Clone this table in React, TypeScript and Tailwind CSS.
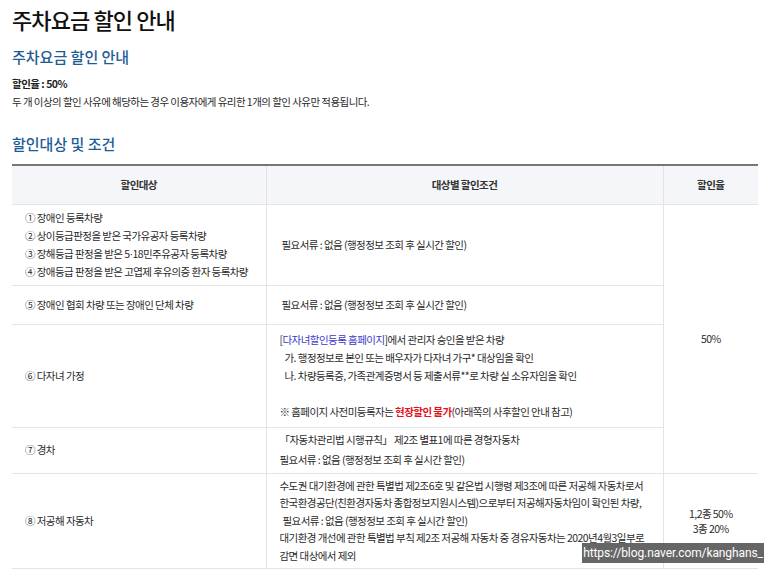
import React from 'react';

const font = "font-['Noto_Sans_CJK_KR','Noto_Sans',sans-serif]";

const Lines = ({ items }: { items: React.ReactNode[] }) => (
  <div>
    {items.map((t, i) => (
      <div key={i} className="whitespace-nowrap leading-[18px] h-[18px]">
        {t}
      </div>
    ))}
  </div>
);

const NO_DOCS = '필요서류 : 없음 (행정정보 조회 후 실시간 할인)';

export default function App() {
  const cell = 'border-b border-[#e4e4e4] px-[13px] align-middle';
  const mid = 'border-l border-r border-[#e1e1e1]';

  return (
    <div className={`relative h-screen overflow-hidden bg-white text-[#2a2a2a] ${font}`}>
      <div className="pl-[12px] pr-[15px] pt-[3px]">
        {/* Titles */}
        <h1 className="text-[22px] leading-[32px] tracking-[-0.9px] font-medium text-[#111]">주차요금 할인 안내</h1>
        <h2 className="mt-[11px] text-[15px] leading-[22px] tracking-[0px] font-medium text-[#1d5c96]">
          주차요금 할인 안내
        </h2>
        <p className="mt-[7px] text-[10.5px] leading-[18px] font-bold tracking-[-0.5px] text-[#222]">할인율 : 50%</p>
        <p className="text-[10.5px] leading-[18px] tracking-[-0.55px]">
          두 개 이상의 할인 사유에 해당하는 경우 이용자에게 유리한 1개의 할인 사유만 적용됩니다.
        </p>
        <h2 className="mt-[22px] text-[15px] leading-[22px] tracking-[0px] font-medium text-[#1d5c96]">
          할인대상 및 조건
        </h2>

        {/* Table */}
        <table className="mt-[9px] w-[746px] border-collapse border-t-2 border-[#777] text-[10.5px] tracking-[-0.55px]">
          <colgroup>
            <col className="w-[254px]" />
            <col className="w-[397px]" />
            <col className="w-[95px]" />
          </colgroup>
          <thead>
            <tr className="h-[39px] bg-[#f5f6f9] text-[#333]">
              <th className="border-b border-[#e4e4e4] font-bold">할인대상</th>
              <th className={`border-b border-[#e4e4e4] font-bold ${mid}`}>대상별 할인조건</th>
              <th className="border-b border-[#e4e4e4] font-bold">할인율</th>
            </tr>
          </thead>
          <tbody>
            <tr className="h-[81px]">
              <td className={cell}>
                <Lines
                  items={[
                    '① 장애인 등록차량',
                    '② 상이등급판정을 받은 국가유공자 등록차량',
                    <>
                      ③ 장해등급 판정을 받은 5<span className="font-['Liberation_Sans',sans-serif]">·</span>18민주유공자 등록차량
                    </>,
                    '④ 장애등급 판정을 받은 고엽제 후유의증 환자 등록차량',
                  ]}
                />
              </td>
              <td className={`${cell} ${mid} pl-[15px]`}>
                <Lines items={[NO_DOCS]} />
              </td>
              <td rowSpan={4} className="border-b border-[#e4e4e4] text-center align-middle">
                50%
              </td>
            </tr>
            <tr className="h-[39px]">
              <td className={cell}>
                <Lines items={['⑤ 장애인 협회 차량 또는 장애인 단체 차량']} />
              </td>
              <td className={`${cell} ${mid} pl-[15px]`}>
                <Lines items={[NO_DOCS]} />
              </td>
            </tr>
            <tr className="h-[103px]">
              <td className={cell}>
                <Lines items={['⑥ 다자녀 가정']} />
              </td>
              <td className={`${cell} ${mid}`}>
                <Lines
                  items={[
                    <>
                      [<span className="text-[#3a3ac8]">다자녀할인등록 홈페이지</span>]에서 관리자 승인을 받은 차량
                    </>,
                    <span className="pl-[5px]">가. 행정정보로 본인 또는 배우자가 다자녀 가구* 대상임을 확인</span>,
                    <span className="pl-[5px]">나. 차량등록증, 가족관계증명서 등 제출서류**로 차량 실 소유자임을 확인</span>,
                    '',
                    <>
                      ※ 홈페이지 사전미등록자는{' '}
                      <span className="font-bold text-[#e8101a]">현장할인 불가</span>(아래쪽의 사후할인 안내 참고)
                    </>,
                  ]}
                />
              </td>
            </tr>
            <tr className="h-[46px]">
              <td className={cell}>
                <Lines items={['⑦ 경차']} />
              </td>
              <td className={`${cell} ${mid}`}>
                <div className="flex flex-col gap-[2px]">
                  <Lines items={['「자동차관리법 시행규칙」 제2조 별표1에 따른 경형자동차']} />
                  <Lines items={[NO_DOCS]} />
                </div>
              </td>
            </tr>
            <tr className="h-[95px]">
              <td className={cell}>
                <Lines items={['⑧ 저공해 자동차']} />
              </td>
              <td className={`${cell} ${mid}`}>
                <div className="leading-[17.5px]">
                  <div className="whitespace-nowrap">
                    수도권 대기환경에 관한 특별법 제2조6호 및 같은법 시행령 제3조에 따른 저공해 자동차로서
                  </div>
                  <div className="whitespace-nowrap">
                    한국환경공단(친환경자동차 종합정보지원시스템)으로부터 저공해자동차임이 확인된 차량,
                  </div>
                  <div className="whitespace-nowrap pl-[3px]">{NO_DOCS}</div>
                  <div className="whitespace-nowrap">
                    대기환경 개선에 관한 특별법 부칙 제2조 저공해 자동차 중 경유자동차는 2020년4월3일부로
                  </div>
                  <div className="whitespace-nowrap">감면 대상에서 제외</div>
                </div>
              </td>
              <td className="border-b border-[#e4e4e4] text-center align-middle leading-[15px]">
                <div>1,2종 50%</div>
                <div>3종 20%</div>
              </td>
            </tr>
          </tbody>
        </table>
      </div>

      {/* Blog watermark */}
      <div className="absolute left-[582px] top-[543px] flex h-[20px] w-[182px] items-center justify-center bg-[#555]/90 font-['Roboto',sans-serif] text-[12px] tracking-[-0.1px] text-white">
        https://blog.naver.com/kanghans_
      </div>
    </div>
  );
}
